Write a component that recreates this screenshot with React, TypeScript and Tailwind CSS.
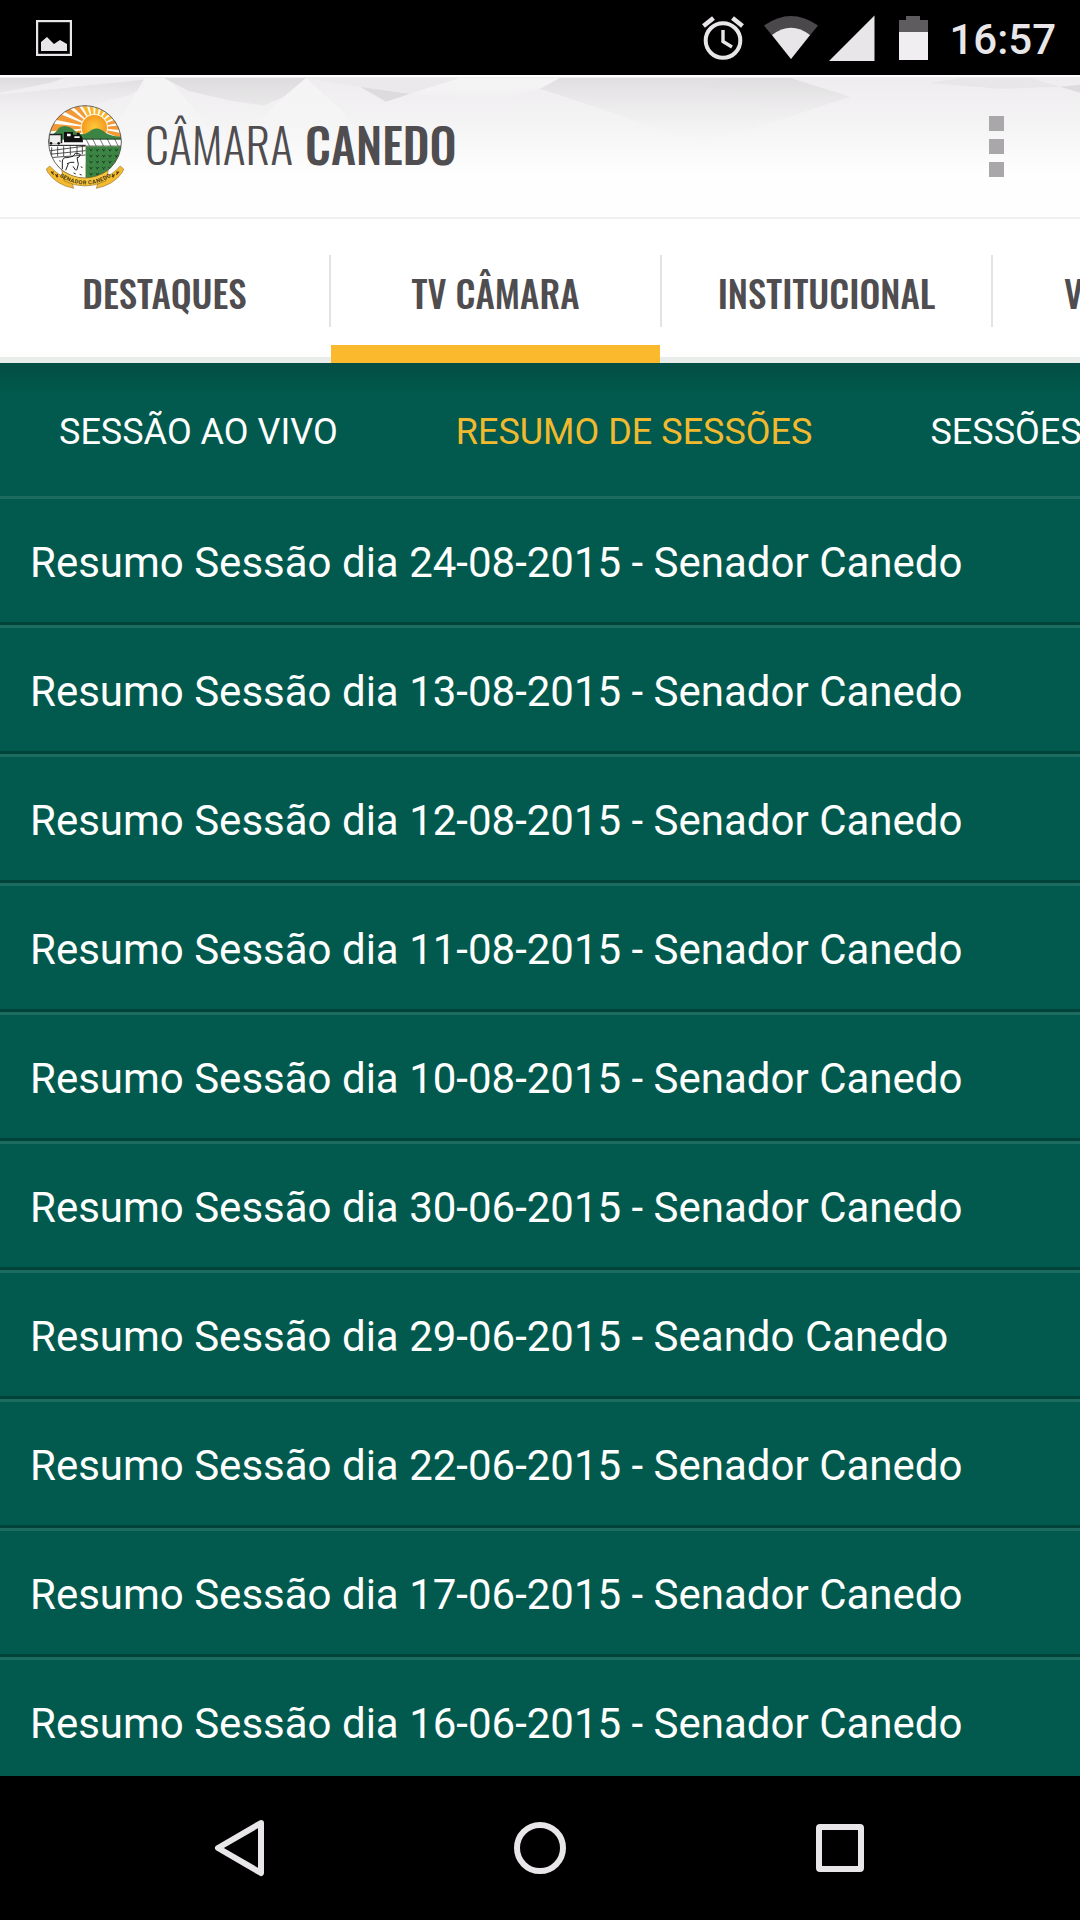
import React from "react";

const mainTabs = [
  { label: "DESTAQUES", active: false },
  { label: "TV CÂMARA", active: true },
  { label: "INSTITUCIONAL", active: false },
  { label: "VEREADORES", active: false },
];

const subTabs = [
  { label: "SESSÃO AO VIVO", active: false },
  { label: "RESUMO DE SESSÕES", active: true },
  { label: "SESSÕES", active: false },
];

const sessions = [
  "Resumo Sessão dia 24-08-2015 - Senador Canedo",
  "Resumo Sessão dia 13-08-2015 - Senador Canedo",
  "Resumo Sessão dia 12-08-2015 - Senador Canedo",
  "Resumo Sessão dia 11-08-2015 - Senador Canedo",
  "Resumo Sessão dia 10-08-2015 - Senador Canedo",
  "Resumo Sessão dia 30-06-2015 - Senador Canedo",
  "Resumo Sessão dia 29-06-2015 - Seando Canedo",
  "Resumo Sessão dia 22-06-2015 - Senador Canedo",
  "Resumo Sessão dia 17-06-2015 - Senador Canedo",
  "Resumo Sessão dia 16-06-2015 - Senador Canedo",
];

function StatusBar() {
  return (
    <div className="flex h-[75px] shrink-0 items-center bg-black pr-6 pl-9 text-[#e8e6e8]">
      <svg className="h-9 w-9" viewBox="0 0 36 36" aria-hidden="true">
        <rect x="1" y="1" width="34" height="34" fill="none" stroke="currentColor" strokeWidth="2.4" />
        <path d="M5 22l6-5 7 7 6-4 7 4v7H5z" fill="currentColor" />
      </svg>
      <div className="ml-auto flex items-center">
        <svg className="h-[46px] w-[42px]" viewBox="0 0 42 46" fill="none" stroke="currentColor" aria-hidden="true">
          <circle cx="21" cy="25.500" r="17.300" strokeWidth="4" />
          <path d="M21 15v11.500l9 5.500" strokeWidth="3.400" />
          <path d="M1.500 11l10-8M40.500 11l-10-8" strokeWidth="4.600" />
        </svg>
        <svg className="ml-5 h-[46px] w-[54px]" viewBox="0 0 54 46" aria-hidden="true">
          <path d="M27 44L0 10.500Q27-8.500 54 10.500z" fill="#4a484b" />
          <path d="M27 44L8 20Q27 5.500 46 20z" fill="currentColor" />
        </svg>
        <svg className="ml-[11px] h-[46px] w-[46px]" viewBox="0 0 46 46" aria-hidden="true">
          <path d="M0 46L45.500 0.500V46z" fill="currentColor" />
        </svg>
        <svg className="ml-6 h-[46px] w-[29px]" viewBox="0 0 29 46" aria-hidden="true">
          <path d="M0 18V5h7V1h14v4h8v13z" fill="#5e5c5f" />
          <path d="M0 17h29v28H0z" fill="#f0eef0" />
        </svg>
        <span className="ml-[21px] pt-1 text-[42px] leading-[50px] font-medium">16:57</span>
      </div>
    </div>
  );
}

function CityCrest() {
  const rays = Array.from({ length: 22 }, (_, i) => i * (360 / 22));
  const plants = [0, 1, 2, 3, 4].flatMap((r) =>
    [0, 1, 2, 3, 4].map((c) => ({ x: 138 + c * 19, y: 140 + r * 18 }))
  );
  return (
    <svg className="h-[87px] w-20 shrink-0" viewBox="0 0 240 261" role="img" aria-label="Brasão de Senador Canedo">
      <defs>
        <clipPath id="crest-disc">
          <circle cx="120" cy="117" r="109" />
        </clipPath>
        <radialGradient id="crest-sun">
          <stop offset="0" stopColor="#fccb3c" />
          <stop offset="1" stopColor="#f6991f" />
        </radialGradient>
        <path id="crest-motto" d="M50 207Q120 252 192 207" />
      </defs>
      <g clipPath="url(#crest-disc)">
        <rect width="240" height="240" fill="#fffdf8" />
        {rays.map((a) => (
          <path key={a} d="M148 74L-20 58L-20 88z" fill={a < 60 || a > 150 ? "#f39a36" : "#fbb62f"} transform={`rotate(${a} 148 74)`} />
        ))}
        <circle cx="148" cy="74" r="41" fill="#fff6dc" />
        <circle cx="148" cy="74" r="38" fill="url(#crest-sun)" />
        <path d="M0 108Q28 96 42 74Q68 60 94 88Q114 100 130 88Q156 64 182 90Q204 102 240 102V118H0z" fill="#3b8443" />
        <rect y="110" width="240" height="20" fill="#fff" />
        <path d="M112 108H240M112 129H240" stroke="#333" strokeWidth="2" />
        <path d="M122 106l12 24M142 106l12 24M164 106l12 24M186 106l12 24M208 106l12 24" stroke="#333" strokeWidth="2" />
        <path d="M8 92H52V121H8z" fill="#222" />
        <path d="M13 97H47V121H13z" fill="#eee" />
        <path d="M57 87H84V95H96V89H104V95Q114 98 114 118H57z" fill="#111" />
        <path d="M66 92H77V100H66zM88 100H104V105H88z" fill="#fff" />
        <circle cx="18" cy="121" r="4" fill="#111" />
        <circle cx="41" cy="121" r="4" fill="#111" />
        <rect y="127" width="122" height="110" fill="#fff" />
        <path d="M0 127H122" stroke="#111" strokeWidth="3" />
        <path d="M10 144L122 129M12 154L122 143M14 164L122 156M20 133V162M38 131V160M56 130V160M76 130V156M96 128V156M112 128V154" stroke="#333" strokeWidth="2.500" fill="none" />
        <path d="M52 198V174Q54 162 66 164L84 160L92 150L106 154L102 162L96 164L100 184L95 202M84 190L92 202M70 182L62 202M66 182Q78 176 88 178" stroke="#222" strokeWidth="3" fill="none" />
        <path d="M28 180l5 4M36 194l6-2M44 172l2 4M86 210l6 3M108 190l4 5M104 214l6 2M60 212l5 2" stroke="#222" strokeWidth="3" />
        <rect x="122" y="130" width="118" height="110" fill="#3b8443" />
        {plants.map((p) => (
          <path key={`${p.x}-${p.y}`} d={`M${p.x - 5} ${p.y - 2}l5 5l5-5M${p.x} ${p.y}v5`} stroke="#17351c" strokeWidth="2.500" fill="none" />
        ))}
      </g>
      <circle cx="120" cy="117" r="109" fill="none" stroke="#4c4a4c" strokeWidth="2.500" />
      <path d="M4 198L14 189Q40 219 78 230L86 256Q34 246 8 208z" fill="#f3b92f" stroke="#7a5b17" strokeWidth="1.500" />
      <path d="M236 198L226 189Q200 219 162 230L154 256Q206 246 232 208z" fill="#f3b92f" stroke="#7a5b17" strokeWidth="1.500" />
      <path d="M50 202Q120 248 190 202L182 234Q120 264 58 234z" fill="#f8c63d" stroke="#7a5b17" strokeWidth="1.500" />
      <path d="M18 206l8 9M25 205l-3 8M31 214l8 8M38 214l-4 9M222 206l-8 9M215 205l3 8M209 214l-8 8M202 214l4 9" stroke="#4a3710" strokeWidth="3.500" />
      <text className="fill-[#4a3710] text-[17px] font-bold" textAnchor="middle" dy="15">
        <textPath href="#crest-motto" startOffset="50%">SENADOR CANEDO</textPath>
      </text>
    </svg>
  );
}

function HeaderBackdrop() {
  return (
    <svg className="absolute inset-0 h-full w-full" viewBox="0 0 1080 144" preserveAspectRatio="none" aria-hidden="true">
      <defs>
        <linearGradient id="sky" x1="0" y1="0" x2="0" y2="1">
          <stop offset="0" stopColor="#eeecee" />
          <stop offset="0.350" stopColor="#f5f4f5" />
          <stop offset="0.700" stopColor="#fffeff" />
        </linearGradient>
        <linearGradient id="ridge" x1="0" y1="0" x2="0" y2="1">
          <stop offset="0" stopColor="#dedcde" />
          <stop offset="1" stopColor="#e9e8e9" />
        </linearGradient>
        <linearGradient id="haze" x1="0" y1="0" x2="0" y2="1">
          <stop offset="0" stopColor="#e0dee0" />
          <stop offset="1" stopColor="#f4f3f4" stopOpacity="0" />
        </linearGradient>
        <linearGradient id="peak" x1="0" y1="0" x2="0" y2="1">
          <stop offset="0" stopColor="#f5f4f5" />
          <stop offset="1" stopColor="#fcfbfc" stopOpacity="0" />
        </linearGradient>
      </defs>
      <rect width="1080" height="144" fill="url(#sky)" />
      <path d="M0 3H64L50 8L0 18z" fill="url(#ridge)" />
      <path d="M0 20L160 3L130 20L60 40L0 50z" fill="url(#haze)" />
      <path d="M145 3L168 3L215 60H110z" fill="url(#peak)" />
      <path d="M164 3H306L284 22L264 31L230 26L188 16z" fill="url(#ridge)" />
      <path d="M306 3L340 34L360 66H240L284 22z" fill="url(#peak)" />
      <path d="M360 12L410 19L386 27z" fill="#dddbdd" />
      <path d="M306 3H460L410 19L360 12z" fill="#ebe9eb" />
      <path d="M410 19L460 3H560L540 14L500 24z" fill="url(#peak)" />
      <path d="M540 14L560 3H790L850 22L790 42L700 70L600 34z" fill="url(#haze)" />
      <path d="M700 12L730 3H790L850 22L780 20z" fill="url(#ridge)" fillOpacity="0.700" />
      <path d="M930 8L960 3H1030L1060 12L1000 14z" fill="#e8e6e8" />
      <path d="M1060 12L1080 10V18z" fill="#dddbdd" />
      <rect width="1080" height="2" fill="#fff" />
    </svg>
  );
}

function AppHeader() {
  return (
    <header className="relative h-36 shrink-0 border-b-2 border-[#f0eff1] bg-white">
      <HeaderBackdrop />
      <div className="relative flex h-full items-center pr-[60px] pl-[45px]">
        <CityCrest />
        <h1 className="ml-5 flex gap-3 pb-1 font-['Oswald','Roboto_Condensed',sans-serif] text-[48px] leading-[72px] whitespace-nowrap text-[#4f4d50]">
          <span className="font-light">CÂMARA</span>
          <span className="font-medium">CANEDO</span>
        </h1>
        <button type="button" aria-label="Mais opções" className="ml-auto flex w-[48px] flex-col items-center gap-2 py-4">
          <span className="h-[15px] w-[15px] bg-[#a9a7aa]" />
          <span className="h-[15px] w-[15px] bg-[#a9a7aa]" />
          <span className="h-[15px] w-[15px] bg-[#a9a7aa]" />
        </button>
      </div>
    </header>
  );
}

function MainTabs() {
  return (
    <nav aria-label="Seções" className="flex h-36 shrink-0 overflow-hidden bg-white font-['Oswald','Roboto_Condensed',sans-serif] shadow-[inset_0_-6px_0_#e8edea]">
      {mainTabs.map((tab, i) => (
        <React.Fragment key={tab.label}>
          {i > 0 && <span className="mt-9 h-[72px] w-[2px] shrink-0 bg-[#e3e2e4]" />}
          <button
            type="button"
            aria-current={tab.active ? "page" : undefined}
            className={
              tab.active
                ? "flex w-[329px] shrink-0 flex-col border-b-[18px] border-[#fbba2d] pt-[46px] text-[37px] leading-[56px] font-medium text-[#4f4d50]"
                : "flex w-[329px] shrink-0 flex-col pt-[46px] text-[37px] leading-[56px] font-medium text-[#4f4d50]"
            }
          >
            <span className="w-full text-center whitespace-nowrap">{tab.label}</span>
          </button>
        </React.Fragment>
      ))}
    </nav>
  );
}

function SubTabs() {
  return (
    <nav aria-label="TV Câmara" className="flex h-[133px] shrink-0 items-center overflow-hidden bg-linear-to-b from-[#034d44] to-transparent to-25%">
      {subTabs.map((tab) => (
        <button
          key={tab.label}
          type="button"
          aria-current={tab.active ? "page" : undefined}
          className={
            tab.active
              ? "h-full shrink-0 px-[59px] pt-1 text-[36px] whitespace-nowrap text-[#f1b92f]"
              : "h-full shrink-0 px-[59px] pt-1 text-[36px] whitespace-nowrap text-white"
          }
        >
          {tab.label}
        </button>
      ))}
    </nav>
  );
}

function SessionList() {
  return (
    <ul className="min-h-0 flex-1 overflow-y-auto [scrollbar-width:none]">
      {sessions.map((title) => (
        <li key={title} className="border-t-[3px] border-b-[3px] border-t-[#1c6c60] border-b-[#014339]">
          <a href="#" className="block truncate px-[30px] pt-[39px] pb-[34px] text-[42px] leading-[50px] text-white">
            {title}
          </a>
        </li>
      ))}
    </ul>
  );
}

function SystemNav() {
  return (
    <div className="flex h-36 shrink-0 bg-black px-[90px] text-[#e8e6e8]">
      <button type="button" aria-label="Voltar" className="flex flex-1 items-center justify-center">
        <svg className="h-[60px] w-[52px]" viewBox="0 0 52 60" fill="none" stroke="currentColor" strokeWidth="6" strokeLinejoin="round">
          <path d="M47 5L4 30L47 55z" />
        </svg>
      </button>
      <button type="button" aria-label="Início" className="flex flex-1 items-center justify-center">
        <svg className="h-[52px] w-[52px]" viewBox="0 0 52 52" fill="none" stroke="currentColor" strokeWidth="6">
          <circle cx="26" cy="26" r="23" />
        </svg>
      </button>
      <button type="button" aria-label="Aplicativos recentes" className="flex flex-1 items-center justify-center">
        <svg className="h-12 w-12" viewBox="0 0 48 48" fill="none" stroke="currentColor" strokeWidth="6" strokeLinejoin="round">
          <rect x="3" y="3" width="42" height="42" rx="1" />
        </svg>
      </button>
    </div>
  );
}

export default function App() {
  return (
    <div className="flex h-screen flex-col overflow-hidden bg-black font-['Roboto',sans-serif]">
      <StatusBar />
      <AppHeader />
      <MainTabs />
      <main className="flex min-h-0 flex-1 flex-col bg-[#015a4d]">
        <SubTabs />
        <SessionList />
      </main>
      <SystemNav />
    </div>
  );
}
